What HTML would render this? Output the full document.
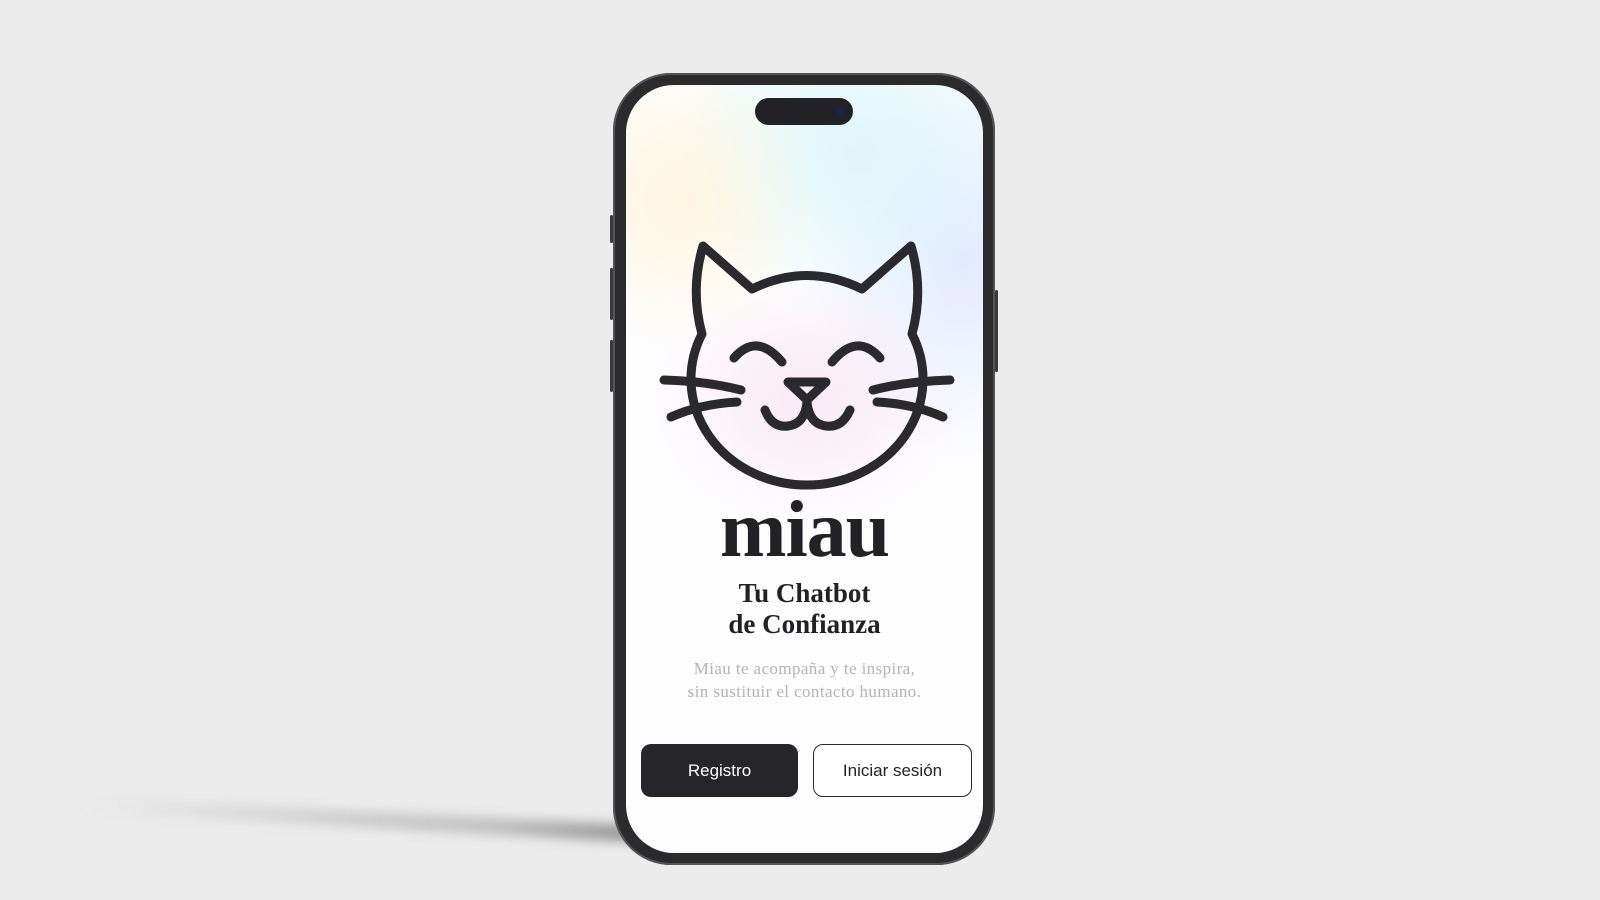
<!DOCTYPE html>
<html><head><meta charset="utf-8"><style>
html,body{margin:0;padding:0}
body{width:1600px;height:900px;background:#ececec;position:relative;overflow:hidden;font-family:"Liberation Sans",sans-serif}
.shadow{position:absolute;left:80px;top:828px;width:600px;height:16px;background:linear-gradient(90deg,rgba(200,200,200,0),rgba(140,140,140,.5) 70%,rgba(80,80,80,.7));filter:blur(6px);transform:rotate(3deg);transform-origin:right center;border-radius:20px}
.phone{position:absolute;left:613px;top:73px;width:382px;height:792px;background:#2b2b2e;border-radius:58px;box-shadow:inset 0 0 0 2px #555}
.screen{position:absolute;left:626px;top:85px;width:357px;height:768px;border-radius:48px;overflow:hidden;background:
radial-gradient(ellipse 160px 130px at 807px 400px,rgba(248,225,240,.7),rgba(255,255,255,0)) ,
radial-gradient(ellipse 140px 150px at 680px 200px,rgba(255,242,210,.7),rgba(255,255,255,0)),
radial-gradient(ellipse 180px 170px at 850px 150px,rgba(215,245,250,.8),rgba(255,255,255,0)),
radial-gradient(ellipse 150px 200px at 960px 260px,rgba(220,230,255,.8),rgba(255,255,255,0)),
#fdfdfe;background-attachment:fixed}
.island{position:absolute;left:755px;top:98px;width:98px;height:27px;background:#222226;border-radius:14px}
.cam{position:absolute;left:835px;top:106px;width:11px;height:11px;border-radius:50%;background:#1a2540}
.t{position:absolute;left:626px;width:357px;text-align:center;font-family:"Liberation Serif",serif;color:#222226}
.btn{position:absolute;top:744px;height:53px;border-radius:10px;box-sizing:border-box;font-size:17px;display:flex;align-items:center;justify-content:center}
.side{position:absolute;background:#3a3a3e;width:3px;border-radius:2px}
</style></head><body>
<div class="shadow"></div>
<div class="side" style="left:610px;top:215px;height:28px"></div>
<div class="side" style="left:610px;top:268px;height:52px"></div>
<div class="side" style="left:610px;top:340px;height:52px"></div>
<div class="side" style="left:995px;top:290px;height:82px"></div>
<div class="phone"></div>
<div class="screen"></div>
<div class="island"></div><div class="cam"></div>
<svg style="position:absolute;left:0;top:0" width="1600" height="900" fill="none" stroke="#2a2a2e" stroke-width="9" stroke-linecap="round" stroke-linejoin="round">
<path d="M702,334 A116,106 0 1 0 912,334 Q924,290 911,246 L862,289 Q807,262 752,289 L703,246 Q690,290 702,334 Z"/>
<path d="M734,358 Q757,332 782,362"/>
<path d="M832,362 Q857,332 880,358"/>
<path d="M788,382 L826,382 L807,400 Z"/>
<path d="M765,410 Q772,428 788,426 Q805,424 807,402 Q809,424 826,426 Q842,428 850,410"/>
<path d="M664,380 Q705,381 741,390"/>
<path d="M671,417 Q700,404 737,402"/>
<path d="M950,380 Q909,381 873,390"/>
<path d="M943,417 Q914,404 877,402"/>
</svg>
<div class="t" style="top:490px;font-size:80px;font-weight:bold;line-height:80px;letter-spacing:-1px">miau</div>
<div class="t" style="top:578px;font-size:27px;line-height:31px;font-weight:bold">Tu Chatbot<br>de Confianza</div>
<div class="t" style="top:657px;font-size:17px;line-height:23px;color:#b4b4b8;letter-spacing:.4px">Miau te acompaña y te inspira,<br>sin sustituir el contacto humano.</div>
<div class="btn" style="left:641px;width:157px;background:#26262a;color:#fff">Registro</div>
<div class="btn" style="left:813px;width:159px;background:#fff;border:1.5px solid #2a2a2e;color:#222">Iniciar sesión</div>
</body></html>
